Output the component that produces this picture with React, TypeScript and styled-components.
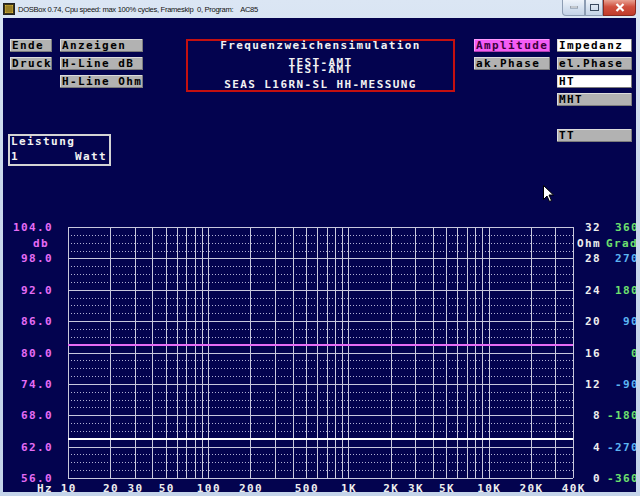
import React from 'react';
import styled, { createGlobalStyle } from 'styled-components';

const DOS_FONT = `"DejaVu Sans Mono", "Liberation Mono", monospace`;

const GlobalStyle = createGlobalStyle`
  html, body {
    margin: 0;
    padding: 0;
    background: #c8d7eb;
  }
  #root {
    width: 640px;
    height: 496px;
  }
`;

const Window = styled.div`
  width: 640px;
  height: 496px;
  display: flex;
  flex-direction: column;
  overflow: hidden;
  background: linear-gradient(180deg, #dbe6f4 0%, #c9d8ec 40%, #c4d4e9 100%);
`;

const TitleBar = styled.div`
  height: 18px;
  flex: none;
  display: flex;
  align-items: center;
  padding-left: 3px;
  gap: 3px;
  font-family: 'Liberation Sans', Arial, sans-serif;
  font-size: 7.6px;
  letter-spacing: -0.3px;
  color: #111;
`;

const TitleText = styled.span`
  flex: 1;
  white-space: pre;
`;

const Controls = styled.div`
  align-self: flex-start;
  display: flex;
  margin-right: 4px;
`;

const CtrlButton = styled.div<{ $w: number; $close?: boolean }>`
  width: ${({ $w }) => $w}px;
  height: 15px;
  display: flex;
  align-items: center;
  justify-content: center;
  border: 1px solid ${({ $close }) => ($close ? '#8a2a20' : '#8d9db3')};
  border-top: none;
  background: ${({ $close }) =>
    $close
      ? 'linear-gradient(180deg, #e8a293 0%, #d0503f 45%, #c13b2b 100%)'
      : 'linear-gradient(180deg, #eef3fa 0%, #d7e2f0 50%, #c4d3e7 100%)'};
  border-radius: ${({ $close }) => ($close ? '0 0 4px 0' : '0')};
  &:first-child {
    border-radius: 0 0 0 4px;
  }
`;

const Body = styled.div`
  flex: 1;
  display: flex;
  padding: 0 4px 4px 3px;
`;

const Client = styled.div`
  position: relative;
  width: 633px;
  height: 474px;
  overflow: hidden;
  background: #03034f;
  padding-top: 21px;
  box-sizing: border-box;
  font-family: ${DOS_FONT};
  font-weight: bold;
  font-size: 11px;
  letter-spacing: 1.4px;
  color: #f2f2f2;
`;

const TopRow = styled.div`
  display: flex;
  align-items: flex-start;
  padding-left: 5px;
`;

const LeftCol = styled.div`
  display: flex;
  flex-direction: column;
`;

const ButtonGrid = styled.div<{ $cols: string; $gap: number }>`
  display: grid;
  grid-template-columns: ${({ $cols }) => $cols};
  grid-auto-rows: 13px;
  column-gap: ${({ $gap }) => $gap}px;
  row-gap: 5px;
`;

const LeftButtons = styled(ButtonGrid)`
  margin-left: 2px;
`;

const DosButton = styled.div<{ $tone?: 'gray' | 'white' | 'magenta'; $col?: number; $row?: number }>`
  grid-column: ${({ $col }) => $col ?? 'auto'};
  grid-row: ${({ $row }) => $row ?? 'auto'};
  height: 13px;
  line-height: 13px;
  padding-left: 2px;
  white-space: pre;
  overflow: hidden;
  color: ${({ $tone }) => ($tone === 'magenta' ? '#3a003a' : '#000')};
  background: ${({ $tone }) =>
    $tone === 'white' ? '#ffffff' : $tone === 'magenta' ? '#f45cf4' : '#b2b2b2'};
  box-shadow: inset -1px -1px 0 ${({ $tone }) => ($tone === 'magenta' ? '#b040b0' : '#7c7c7c')},
    inset 1px 1px 0 ${({ $tone }) => ($tone === 'magenta' ? '#ff9cff' : '#dcdcdc')};
`;

const TitleBox = styled.div`
  margin-left: 43px;
  width: 269px;
  height: 53px;
  box-sizing: border-box;
  border: 2px solid #c41010;
  display: flex;
  flex-direction: column;
  align-items: center;
`;

const TitleLine = styled.div<{ $lh: number; $mt?: number }>`
  line-height: ${({ $lh }) => $lh}px;
  height: ${({ $lh }) => $lh}px;
  margin-top: ${({ $mt }) => $mt ?? 0}px;
  white-space: pre;
`;

const RightGrid = styled(ButtonGrid)`
  margin-left: 19px;
`;

const PowerBox = styled.div`
  margin-top: 46px;
  width: 103px;
  height: 32px;
  box-sizing: border-box;
  border: 2px solid #d4d4d4;
  display: flex;
  flex-direction: column;
  justify-content: space-between;
  padding: 0 2px 1px 1px;
  line-height: 12px;
`;

const PowerRow = styled.div`
  display: flex;
  justify-content: space-between;
`;

const ChartSvg = styled.svg`
  display: block;
  margin-top: 48px;
  text {
    font-family: ${DOS_FONT};
    font-weight: bold;
    font-size: 11px;
    letter-spacing: 1.4px;
  }
`;

const Cursor = styled.svg`
  position: absolute;
  left: 540px;
  top: 167px;
`;

const PX0 = 65;
const PX1 = 570;
const PY0 = 13;
const PY1 = 264;
const STEP = (PY1 - PY0) / 32;

const xOf = (f: number) => PX0 + ((PX1 - PX0) * Math.log10(f / 10)) / Math.log10(4000);

const freqLines: number[] = [];
[10, 100, 1000, 10000].forEach((d) => {
  for (let m = 1; m <= 9; m++) {
    if (d * m <= 40000) freqLines.push(d * m);
  }
});

const xLabels: [string, number][] = [
  ['10', 10],
  ['20', 20],
  ['30', 30],
  ['50', 50],
  ['100', 100],
  ['200', 200],
  ['500', 500],
  ['1K', 1000],
  ['2K', 2000],
  ['3K', 3000],
  ['5K', 5000],
  ['10K', 10000],
  ['20K', 20000],
  ['40K', 40000],
];

const dbLabels = ['104.0', '98.0', '92.0', '86.0', '80.0', '74.0', '68.0', '62.0', '56.0'];
const ohmLabels = ['32', '28', '24', '20', '16', '12', '8', '4', '0'];
const gradLabels = ['360', '270', '180', '90', '0', '-90', '-180', '-270', '-360'];

const MAGENTA = '#e66cf5';
const GREEN = '#6ee06e';
const BLUE = '#5cb4f2';

function Chart() {
  const majorY = (i: number) => PY0 + i * 4 * STEP;
  const midY = (majorY(0) + majorY(1)) / 2 + 4;
  return (
    <ChartSvg width={633} height={278}>
      {Array.from({ length: 33 }).map((_, k) => {
        const y = Math.round(PY0 + k * STEP) + 0.5;
        const solid = k % 4 === 0;
        return (
          <line
            key={`h${k}`}
            x1={PX0}
            x2={PX1}
            y1={y}
            y2={y}
            stroke={solid ? '#c8c8de' : '#b0b0d6'}
            strokeWidth={1}
            strokeDasharray={solid ? undefined : '1 2'}
          />
        );
      })}
      {freqLines.map((f) => {
        const x = Math.round(xOf(f)) + 0.5;
        return <line key={`v${f}`} x1={x} x2={x} y1={PY0} y2={PY1} stroke="#c8c8dc" strokeWidth={1} />;
      })}
      <line x1={PX0} x2={PX1} y1={131} y2={131} stroke={MAGENTA} strokeWidth={2} />
      <line x1={PX0} x2={PX1} y1={225} y2={225} stroke="#ffffff" strokeWidth={2} />

      {dbLabels.map((t, i) => (
        <text key={t} x={50} y={majorY(i) + 4} textAnchor="end" fill={MAGENTA}>
          {t}
        </text>
      ))}
      <text x={46} y={midY} textAnchor="end" fill={MAGENTA}>
        db
      </text>

      {ohmLabels.map((t, i) => (
        <text key={`o${t}`} x={598} y={majorY(i) + 4} textAnchor="end" fill="#eeeeee">
          {t}
        </text>
      ))}
      <text x={574} y={midY} fill="#eeeeee">
        Ohm
      </text>

      {gradLabels.map((t, i) => (
        <text key={`g${t}`} x={636} y={majorY(i) + 4} textAnchor="end" fill={i % 2 === 0 ? GREEN : BLUE}>
          {t}
        </text>
      ))}
      <text x={603} y={midY} fill={GREEN}>
        Grad
      </text>

      <text x={34} y={278} fill="#eeeeee">
        Hz
      </text>
      {xLabels.map(([t, f]) => (
        <text key={`x${t}`} x={xOf(f) + 0.7} y={278} textAnchor="middle" fill="#eeeeee">
          {t}
        </text>
      ))}
    </ChartSvg>
  );
}

function DosIcon() {
  return (
    <svg width="12" height="12" viewBox="0 0 12 12">
      <rect x="0.5" y="0.5" width="11" height="11" fill="#3a3418" stroke="#222" />
      <rect x="2" y="2" width="8" height="8" fill="#d9b43a" />
      <path d="M2 4h8M2 6h8M2 8h8M4 2v8M6 2v8M8 2v8" stroke="#6b5a1a" strokeWidth="0.7" />
    </svg>
  );
}

function App() {
  return (
    <>
      <GlobalStyle />
      <Window>
        <TitleBar>
          <DosIcon />
          <TitleText>DOSBox 0.74, Cpu speed: max 100% cycles, Frameskip  0, Program:    AC85</TitleText>
          <Controls>
            <CtrlButton $w={21}>
              <svg width="8" height="3">
                <rect x="0" y="0" width="8" height="2" fill="#fff" stroke="#3a4a60" strokeWidth="0.6" />
              </svg>
            </CtrlButton>
            <CtrlButton $w={16}>
              <svg width="9" height="7">
                <rect x="0.5" y="0.5" width="8" height="6" fill="none" stroke="#3a4a60" />
              </svg>
            </CtrlButton>
            <CtrlButton $w={31} $close>
              <svg width="10" height="9" viewBox="0 0 10 9">
                <path d="M1.5 1L8.5 8M8.5 1L1.5 8" stroke="#fff" strokeWidth="2.2" />
              </svg>
            </CtrlButton>
          </Controls>
        </TitleBar>
        <Body>
          <Client>
            <TopRow>
              <LeftCol>
                <LeftButtons $cols="42px 83px" $gap={8}>
                  <DosButton $col={1} $row={1}>Ende</DosButton>
                  <DosButton $col={2} $row={1}>Anzeigen</DosButton>
                  <DosButton $col={1} $row={2}>Druck</DosButton>
                  <DosButton $col={2} $row={2}>H-Line dB</DosButton>
                  <DosButton $col={2} $row={3}>H-Line Ohm</DosButton>
                </LeftButtons>
                <PowerBox>
                  <span>Leistung</span>
                  <PowerRow>
                    <span>1</span>
                    <span>Watt</span>
                  </PowerRow>
                </PowerBox>
              </LeftCol>
              <TitleBox>
                <TitleLine $lh={10}>Frequenzweichensimulation</TitleLine>
                <TitleLine $lh={7} $mt={7.5}>TEST-AMT</TitleLine>
                <TitleLine $lh={7}>TEST-AMT</TitleLine>
                <TitleLine $lh={10} $mt={7}>SEAS L16RN-SL HH-MESSUNG</TitleLine>
              </TitleBox>
              <RightGrid $cols="76px 75px" $gap={7}>
                <DosButton $tone="magenta" $col={1} $row={1}>Amplitude</DosButton>
                <DosButton $tone="white" $col={2} $row={1}>Impedanz</DosButton>
                <DosButton $col={1} $row={2}>ak.Phase</DosButton>
                <DosButton $col={2} $row={2}>el.Phase</DosButton>
                <DosButton $tone="white" $col={2} $row={3}>HT</DosButton>
                <DosButton $col={2} $row={4}>MHT</DosButton>
                <DosButton $col={2} $row={6}>TT</DosButton>
              </RightGrid>
            </TopRow>
            <Chart />
            <Cursor width="11" height="17" viewBox="0 0 11 17">
              <path d="M0.5 0.5V14.5L4 11L6.5 16.5L8.5 15.5L6 10H10.5Z" fill="#fff" stroke="#000" strokeWidth="1" />
            </Cursor>
          </Client>
        </Body>
      </Window>
    </>
  );
}

export default App;
